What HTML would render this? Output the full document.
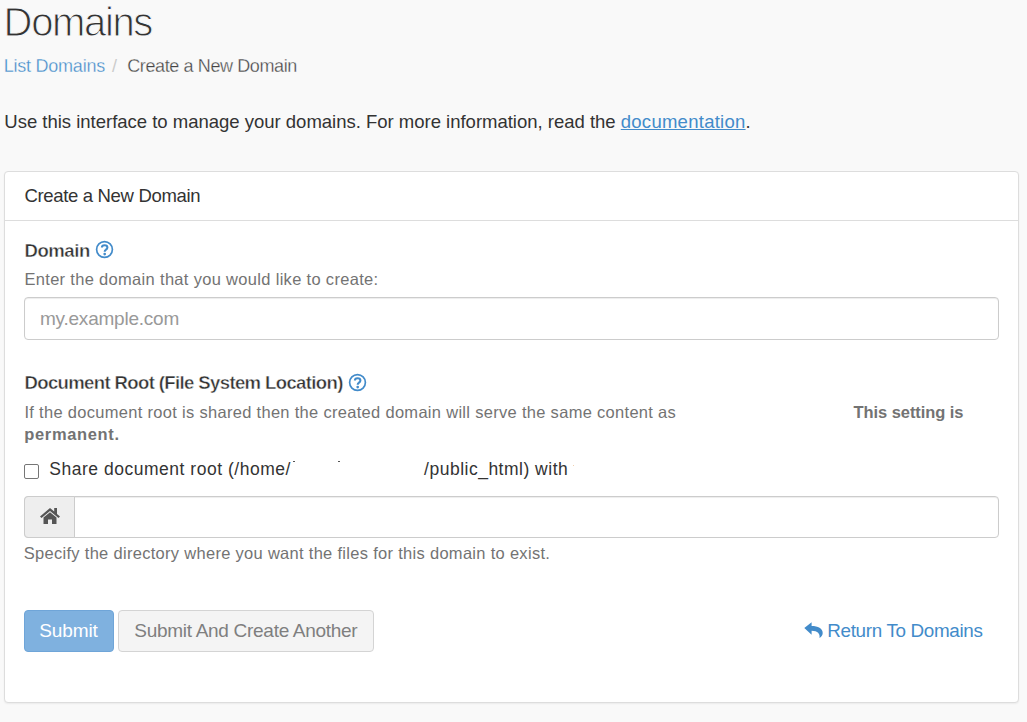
<!DOCTYPE html>
<html><head><meta charset="utf-8">
<style>
html,body{margin:0;padding:0;}
body{width:1027px;height:722px;overflow:hidden;background:#f9f9f9;font-family:"Liberation Sans",sans-serif;color:#333;position:relative;}
.t{position:absolute;white-space:nowrap;line-height:1;}
.ic{position:absolute;}
#panel{position:absolute;left:4px;top:171px;width:1013px;height:530px;background:#fff;border:1px solid #ddd;border-radius:4px;box-shadow:0 1px 2px rgba(0,0,0,.06);}
#phead{position:absolute;left:0;top:0;width:1013px;height:48px;border-bottom:1px solid #ddd;}
.box{position:absolute;background:#fff;border:1px solid #ccc;border-radius:4px;box-sizing:border-box;box-shadow:inset 0 1px 1px rgba(0,0,0,.075);}
</style></head>
<body>
<div class="t" id="h1" style="left:3.6px;top:2px;font-size:40px;color:#333;letter-spacing:-1.350px;-webkit-text-stroke:1px #f9f9f9;">Domains</div>
<div class="t" id="bc1" style="left:3.74px;top:57px;font-size:18px;color:#428bca;letter-spacing:-0.236px;-webkit-text-stroke:0.3px #f9f9f9;">List Domains</div>
<div class="t" id="bcs" style="left:112px;top:57px;font-size:18px;color:#ccc;">/</div>
<div class="t" id="bc2" style="left:127.28px;top:57px;font-size:18px;color:#444;letter-spacing:-0.390px;-webkit-text-stroke:0.3px #f9f9f9;">Create a New Domain</div>
<div class="t" id="para" style="left:4.3px;top:113px;font-size:18.54px;color:#333;letter-spacing:-0.021px;">Use this interface to manage your domains. For more information, read the <span style="color:#428bca;text-decoration:underline;letter-spacing:0.25px;">documentation</span>.</div>
<div id="panel"><div id="phead"></div></div>
<div class="t" id="ph" style="left:24.42px;top:187px;font-size:18.54px;color:#333;letter-spacing:-0.340px;">Create a New Domain</div>
<div class="t" id="lab1" style="left:24.44px;top:242px;font-size:18.54px;color:#333;letter-spacing:-0.432px;font-weight:bold;-webkit-text-stroke:0.4px #fff;">Domain</div>
<svg class="ic" id="help1" style="left:94.6px;top:240.3px;" width="19" height="19" viewBox="0 0 19 19"><circle cx="9.5" cy="9.5" r="7.9" fill="none" stroke="#428bca" stroke-width="1.7"/><path d="M6.9 7.5 C6.9 6 8 5.2 9.6 5.2 C11.2 5.2 12.4 6.1 12.4 7.5 C12.4 8.8 11.5 9.3 10.7 9.8 C10 10.2 9.7 10.6 9.7 11.7" fill="none" stroke="#428bca" stroke-width="2.1"/><circle cx="9.7" cy="14.1" r="1.35" fill="#428bca"/></svg>
<div class="t" id="help1t" style="left:24.44px;top:271px;font-size:16.48px;color:#737373;letter-spacing:0.326px;">Enter the domain that you would like to create:</div>
<div class="box" id="in1" style="left:24px;top:297px;width:975px;height:43px;"></div>
<div class="t" id="ph1" style="left:40.02px;top:309px;font-size:19px;color:#999;letter-spacing:-0.228px;">my.example.com</div>
<div class="t" id="lab2" style="left:24.44px;top:374px;font-size:18.54px;color:#333;letter-spacing:-0.624px;font-weight:bold;-webkit-text-stroke:0.4px #fff;">Document Root (File System Location)</div>
<svg class="ic" id="help2" style="left:347.8px;top:372.8px;" width="19" height="19" viewBox="0 0 19 19"><circle cx="9.5" cy="9.5" r="7.9" fill="none" stroke="#428bca" stroke-width="1.7"/><path d="M6.9 7.5 C6.9 6 8 5.2 9.6 5.2 C11.2 5.2 12.4 6.1 12.4 7.5 C12.4 8.8 11.5 9.3 10.7 9.8 C10 10.2 9.7 10.6 9.7 11.7" fill="none" stroke="#428bca" stroke-width="2.1"/><circle cx="9.7" cy="14.1" r="1.35" fill="#428bca"/></svg>
<div class="t" id="gp1" style="left:24.44px;top:404px;font-size:16.48px;color:#737373;letter-spacing:0.311px;">If the document root is shared then the created domain will serve the same content as</div>
<div class="t" id="gp2" style="left:853.56px;top:404px;font-size:16.48px;color:#737373;letter-spacing:-0.053px;font-weight:bold;">This setting is</div>
<div class="t" id="gp3" style="left:24.3px;top:426px;font-size:16.48px;color:#737373;letter-spacing:0.660px;font-weight:bold;">permanent.</div>
<div class="box" id="cb" style="box-shadow:none;left:24px;top:464px;width:15px;height:15px;border:1px solid #767676;border-radius:2px;"></div>
<div class="t" id="sh1" style="left:49.28px;top:461px;font-size:17.51px;color:#333;letter-spacing:0.519px;">Share document root (/home/</div>
<div class="t" id="sh2" style="left:424.12px;top:461px;font-size:17.51px;color:#333;letter-spacing:0.496px;">/public_html) with</div>
<div style="position:absolute;left:293px;top:461px;width:2px;height:1px;background:#555;"></div><div style="position:absolute;left:338px;top:461px;width:2px;height:1px;background:#555;"></div><div style="position:absolute;left:573px;top:465px;width:1px;height:1px;background:#f0d0b0;"></div>
<div class="box" id="in2" style="left:24px;top:496px;width:975px;height:42px;"></div>
<div id="addon" style="position:absolute;left:24px;top:496px;width:51px;height:42px;box-sizing:border-box;background:#eee;border:1px solid #ccc;border-radius:4px 0 0 4px;"></div>
<svg class="ic" id="home" style="left:39px;top:507px;" width="22" height="18" viewBox="0 0 22 18"><path d="M11 1 L1 9.5 L2.5 11 L11 4 L19.5 11 L21 9.5 L18 6.95 L18 1 L15.2 1 L15.2 4.5 Z M4.5 10.5 L4.5 17 L9 17 L9 12.5 L13 12.5 L13 17 L17.5 17 L17.5 10.5 L11 5.3 Z" fill="#555"/></svg>
<div class="t" id="sp" style="left:23.72px;top:545px;font-size:16.48px;color:#737373;letter-spacing:0.307px;">Specify the directory where you want the files for this domain to exist.</div>
<div id="btn1" style="position:absolute;left:24px;top:610px;width:90px;height:42px;box-sizing:border-box;background:#7fb1df;border:1px solid #6fa5d8;border-radius:4px;"></div>
<div class="t" id="btn1t" style="left:39.3px;top:621px;font-size:19.05px;color:#fff;letter-spacing:-0.144px;">Submit</div>
<div id="btn2" style="position:absolute;left:118px;top:610px;width:256px;height:42px;box-sizing:border-box;background:#f4f4f4;border:1px solid #d4d4d4;border-radius:4px;"></div>
<div class="t" id="btn2t" style="left:134.3px;top:621px;font-size:19.05px;color:#7f7f7f;letter-spacing:-0.301px;">Submit And Create Another</div>
<svg class="ic" id="reply" style="left:804px;top:621px;" width="20" height="17" viewBox="0 0 20 17"><path d="M0.3 7 L7.6 1.2 L7.6 5.1 C14 5.1 18.7 7.5 18.7 12 C18.7 14 17.6 15.8 15.5 16.9 C16.3 13 13.8 9.8 7.6 9.8 L7.6 13.7 Z" fill="#428bca"/></svg>
<div class="t" id="ret" style="left:827.3px;top:622px;font-size:18.85px;color:#428bca;letter-spacing:-0.338px;">Return To Domains</div>
</body></html>
